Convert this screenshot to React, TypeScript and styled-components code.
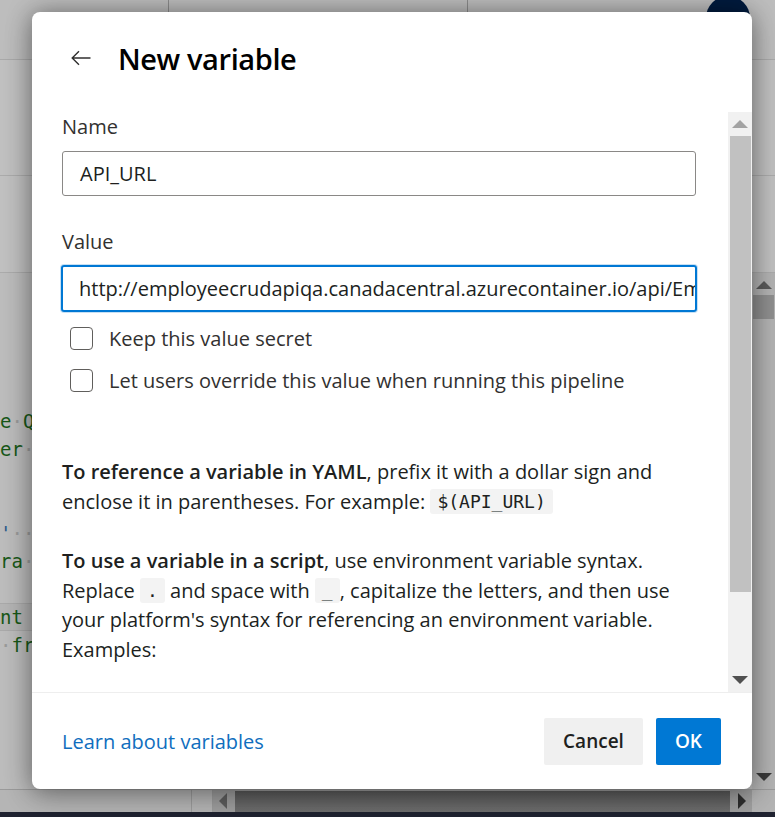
import React from "react";
import styled, { createGlobalStyle } from "styled-components";

const Global = createGlobalStyle`
  html, body { margin: 0; padding: 0; }
  body { font-family: "Open Sans", "Noto Sans", sans-serif; }
  * { box-sizing: border-box; }
`;

const UI = `"Open Sans", "Noto Sans", sans-serif`;
const MONO = `"DejaVu Sans Mono", "Liberation Mono", monospace`;

const Page = styled.div`
  position: relative;
  width: 775px;
  height: 817px;
  overflow: hidden;
  background: #bababa;
  display: flex;
  flex-direction: column;
`;

const TopBar = styled.div`
  height: 60px;
  flex: none;
  border-bottom: 1px solid #a9a9a9;
  background: #bdbdbd;
  display: flex;
  align-items: flex-start;
`;

const TabBox = styled.div`
  margin-left: 168px;
  width: 300px;
  height: 30px;
  border: 1px solid #8c8c8c;
  border-top: none;
  border-radius: 0 0 4px 4px;
`;

const Avatar = styled.div`
  margin-left: auto;
  margin-right: 25px;
  margin-top: -4px;
  width: 44px;
  height: 44px;
  border-radius: 50%;
  background: #021b3e;
`;

const Band = styled.div<{ $h: number }>`
  height: ${(p) => p.$h}px;
  flex: none;
  border-bottom: 1px solid #ababab;
  background: #c0c0c0;
`;

const Main = styled.div`
  flex: 1;
  display: flex;
  min-height: 0;
`;

const Editor = styled.div`
  flex: 1;
  padding-top: 134px;
  background: #bcbcbc;
  font-family: ${MONO};
  font-size: 19px;
  line-height: 28px;
  color: #185818;
`;

const CodeLine = styled.div<{ $hl?: boolean }>`
  height: 28px;
  white-space: pre;
  border-top: 1px solid ${(p) => (p.$hl ? "#a9a9a9" : "transparent")};
  border-bottom: 1px solid ${(p) => (p.$hl ? "#a9a9a9" : "transparent")};
  background: ${(p) => (p.$hl ? "#b4b4b4" : "transparent")};
  line-height: 26px;
`;

const Dot = styled.span`
  color: #9a9a9a;
`;

const Blue = styled.span`
  color: #2b5a8a;
`;

const VScroll = styled.div`
  width: 23px;
  flex: none;
  background: #b3b3b3;
  display: flex;
  flex-direction: column;
  align-items: center;
  padding-top: 8px;
`;

const VThumb = styled.div`
  width: 21px;
  height: 24px;
  margin-top: 6px;
  background: #8f8f8f;
`;

const Spacer = styled.div`
  flex: 1;
`;

const HScroll = styled.div`
  height: 23px;
  flex: none;
  display: flex;
  align-items: stretch;
  background: #a8a8a8;
  border-top: 1px solid #9a9a9a;
`;

const HGutter = styled.div`
  width: 213px;
  flex: none;
  background: #b5b5b5;
  border-right: 1px solid #9c9c9c;
  display: flex;
  justify-content: flex-end;
`;

const HGutterLine = styled.div`
  width: 21px;
  border-left: 1px solid #9c9c9c;
`;

const HTrack = styled.div`
  flex: 1;
  display: flex;
  align-items: center;
  padding: 0 6px;
  gap: 8px;
  background: #9e9e9e;
`;

const HThumb = styled.div`
  flex: 1;
  height: 21px;
  background: linear-gradient(#5a5a5a, #6e6e6e);
`;

const Corner = styled.div`
  width: 23px;
  flex: none;
  background: #b3b3b3;
`;

const Taskbar = styled.div`
  height: 5px;
  flex: none;
  background: #1f2230;
`;

/* ---------- dialog ---------- */

const Dialog = styled.div`
  position: absolute;
  left: 32px;
  top: 12px;
  width: 720px;
  height: 777px;
  background: #ffffff;
  border-radius: 8px;
  box-shadow: 0 0 24px rgba(0, 0, 0, 0.35), 0 8px 30px rgba(0, 0, 0, 0.2);
  display: flex;
  flex-direction: column;
  overflow: hidden;
  font-family: ${UI};
  color: #201f1e;
`;

const Header = styled.div`
  height: 100px;
  flex: none;
  display: flex;
  align-items: center;
  padding-left: 38px;
  padding-bottom: 8px;
`;

const BackButton = styled.button`
  width: 22px;
  height: 22px;
  padding: 0;
  border: none;
  background: none;
  display: flex;
  align-items: center;
  justify-content: center;
  margin-right: 26px;
  color: #323130;
`;

const Title = styled.h1`
  margin: 0;
  font-family: ${UI};
  font-size: 29px;
  font-weight: 600;
  letter-spacing: -0.4px;
  color: #000;
`;

const ScrollArea = styled.div`
  flex: 1;
  display: flex;
  min-height: 0;
  border-bottom: 1px solid #eeeeee;
`;

const Content = styled.div`
  flex: 1;
  padding: 0 32px 0 30px;
  overflow: hidden;
`;

const Label = styled.div<{ $top: number }>`
  margin-top: ${(p) => p.$top}px;
  font-size: 20px;
  line-height: 28px;
  color: #323130;
`;

const Input = styled.div<{ $focused?: boolean }>`
  margin-top: ${(p) => (p.$focused ? 9 : 10)}px;
  height: ${(p) => (p.$focused ? 47 : 45)}px;
  margin-left: ${(p) => (p.$focused ? -1 : 0)}px;
  margin-right: ${(p) => (p.$focused ? -1 : 0)}px;
  border: ${(p) => (p.$focused ? "2px solid #0078d4" : "1px solid #8a8886")};
  box-shadow: ${(p) => (p.$focused ? "0 0 0 1px #c7e0f4" : "none")};
  border-radius: 3px;
  padding: 0 ${(p) => (p.$focused ? 16 : 17)}px;
  display: flex;
  align-items: center;
  font-size: 20px;
  color: #201f1e;
  white-space: nowrap;
  overflow: hidden;
`;

const CheckRow = styled.label<{ $top: number }>`
  margin-top: ${(p) => p.$top}px;
  display: flex;
  align-items: center;
  padding-left: 8px;
  gap: 16px;
  height: 28px;
  font-size: 20px;
  color: #323130;
`;

const Box = styled.span`
  width: 23px;
  height: 23px;
  border: 1px solid #605e5c;
  border-radius: 4px;
  background: #fff;
  flex: none;
`;

const Para = styled.p<{ $top: number }>`
  margin: ${(p) => p.$top}px 0 0;
  font-size: 20px;
  line-height: 29.5px;
  color: #201f1e;
`;

const Strong = styled.strong`
  font-weight: 600;
`;

const Code = styled.code`
  display: inline-block;
  font-family: ${MONO};
  font-size: 18px;
  line-height: 25px;
  background: #f3f3f3;
  border-radius: 3px;
  padding: 0 7px;
  vertical-align: 1px;
`;

const Scrollbar = styled.div`
  width: 24px;
  flex: none;
  background: #f1f1f1;
  display: flex;
  flex-direction: column;
  align-items: center;
`;

const ArrowCell = styled.div`
  height: 24px;
  width: 100%;
  display: flex;
  align-items: center;
  justify-content: center;
  flex: none;
`;

const Thumb = styled.div`
  width: 21px;
  height: 456px;
  background: #c1c1c1;
  flex: none;
`;

const Footer = styled.div`
  height: 96px;
  flex: none;
  display: flex;
  align-items: center;
  padding: 0 31px 0 30px;
`;

const Link = styled.a`
  font-size: 20px;
  color: #106ebe;
  text-decoration: none;
  margin-right: auto;
`;

const Button = styled.button<{ $primary?: boolean }>`
  height: 47px;
  padding: 0 19px;
  border: none;
  border-radius: 2px;
  font-family: ${UI};
  font-size: 19px;
  font-weight: 600;
  background: ${(p) => (p.$primary ? "#0078d4" : "#f0f0f0")};
  color: ${(p) => (p.$primary ? "#fff" : "#201f1e")};
  margin-left: ${(p) => (p.$primary ? 13 : 0)}px;
`;

const Tri = ({ dir, color }: { dir: "up" | "down" | "left" | "right"; color: string }) => {
  const pts =
    dir === "up"
      ? "0,8 8,0 16,8"
      : dir === "down"
      ? "0,0 16,0 8,8"
      : dir === "left"
      ? "8,0 8,16 0,8"
      : "0,0 8,8 0,16";
  const w = dir === "up" || dir === "down" ? 16 : 8;
  const h = dir === "up" || dir === "down" ? 8 : 16;
  return (
    <svg width={w} height={h} viewBox={`0 0 ${w} ${h}`}>
      <polygon points={pts} fill={color} />
    </svg>
  );
};

export default function App() {
  return (
    <>
      <Global />
      <Page>
        <TopBar>
          <TabBox />
          <Avatar />
        </TopBar>
        <Band $h={116} />
        <Band $h={97} />
        <Main>
          <Editor>
            <CodeLine>
              e<Dot>·</Dot>Q
            </CodeLine>
            <CodeLine>
              er<Dot>·</Dot>
            </CodeLine>
            <CodeLine> </CodeLine>
            <CodeLine> </CodeLine>
            <CodeLine>
              <Blue>'</Blue>
              <Dot>··</Dot>
            </CodeLine>
            <CodeLine>
              ra<Dot>·</Dot>
            </CodeLine>
            <CodeLine> </CodeLine>
            <CodeLine $hl>nt</CodeLine>
            <CodeLine>
              <Dot>·</Dot>fr
            </CodeLine>
          </Editor>
          <VScroll>
            <Tri dir="up" color="#5a5a5a" />
            <VThumb />
            <Spacer />
            <ArrowCell>
              <Tri dir="down" color="#3a3a3a" />
            </ArrowCell>
          </VScroll>
        </Main>
        <HScroll>
          <HGutter>
            <HGutterLine />
          </HGutter>
          <HTrack>
            <Tri dir="left" color="#5e5e5e" />
            <HThumb />
            <Tri dir="right" color="#2e2e2e" />
          </HTrack>
          <Corner />
        </HScroll>
        <Taskbar />

        <Dialog role="dialog" aria-label="New variable">
          <Header>
            <BackButton aria-label="Back">
              <svg width="20" height="16" viewBox="0 0 20 16" fill="none">
                <path d="M19.5 8H1.2M8 1.2L1.2 8L8 14.8" stroke="#323130" strokeWidth="1.4" />
              </svg>
            </BackButton>
            <Title>New variable</Title>
          </Header>
          <ScrollArea>
            <Content>
              <Label $top={1}>Name</Label>
              <Input>API_URL</Input>
              <Label $top={32}>Value</Label>
              <Input $focused>
                http://employeecrudapiqa.canadacentral.azurecontainer.io/api/Employee
              </Input>
              <CheckRow $top={12}>
                <Box />
                Keep this value secret
              </CheckRow>
              <CheckRow $top={14}>
                <Box />
                Let users override this value when running this pipeline
              </CheckRow>
              <Para $top={63}>
                <Strong>To reference a variable in YAML</Strong>, prefix it with a dollar sign and
                enclose it in parentheses. For example: <Code>$(API_URL)</Code>
              </Para>
              <Para $top={30}>
                <Strong>To use a variable in a script</Strong>, use environment variable syntax.
                Replace <Code>.</Code> and space with <Code>_</Code>, capitalize the letters, and
                then use your platform's syntax for referencing an environment variable.
                Examples:
              </Para>
            </Content>
            <Scrollbar>
              <ArrowCell>
                <Tri dir="up" color="#a3a3a3" />
              </ArrowCell>
              <Thumb />
              <Spacer />
              <ArrowCell>
                <Tri dir="down" color="#505050" />
              </ArrowCell>
            </Scrollbar>
          </ScrollArea>
          <Footer>
            <Link href="#">Learn about variables</Link>
            <Button>Cancel</Button>
            <Button $primary>OK</Button>
          </Footer>
        </Dialog>
      </Page>
    </>
  );
}
